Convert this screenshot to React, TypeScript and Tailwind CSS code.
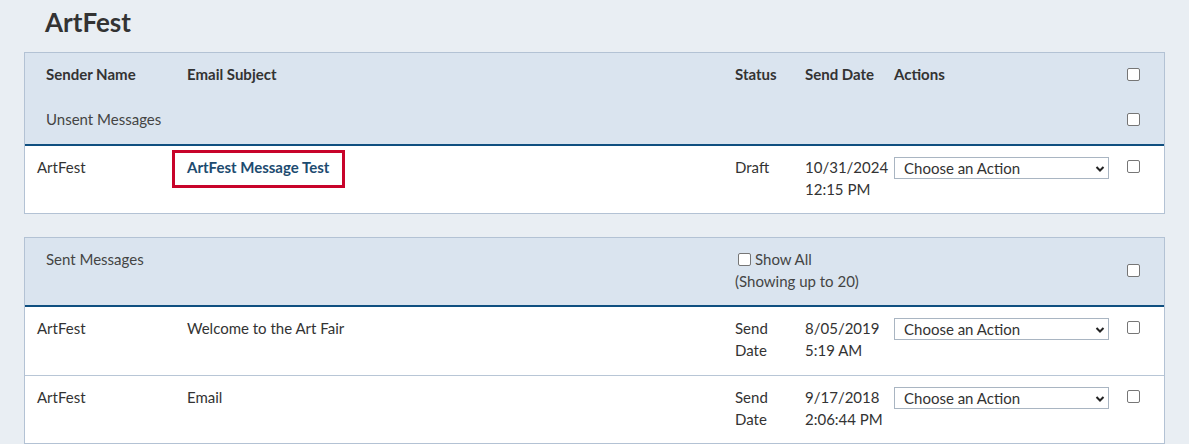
import React from "react";

const COLS = "grid grid-cols-[162px_548px_70px_89px_232px_1fr]";

function Check() {
  return (
    <span className="inline-block w-[13px] h-[13px] rounded-[2px] border border-[#767676] bg-white box-border" />
  );
}

function ActionSelect() {
  return (
    <div className="relative w-[215px] h-[22px] border border-[#a9b5c2] bg-white flex items-center pl-[9px] text-[15px] text-[#333] leading-none box-border">
      <span>Choose an Action</span>
      <svg className="absolute right-[3px] top-[7px]" width="10" height="8" viewBox="0 0 10 8">
        <path d="M1.5 2 L5 5.5 L8.5 2" fill="none" stroke="#222" strokeWidth="2" />
      </svg>
    </div>
  );
}

function DataRow({
  sender,
  subject,
  status,
  date,
  highlight,
  last,
}: {
  sender: string;
  subject: string;
  status: React.ReactNode;
  date: React.ReactNode;
  highlight?: boolean;
  last?: boolean;
}) {
  return (
    <div className={`${COLS} bg-white pt-[10px] leading-[22px] text-[15px] text-[#333] ${last ? "pb-[13px]" : "pb-[14px] border-b border-[#b8c6d6]"}`}>
      <div className="pl-[12px]">{sender}</div>
      <div className="relative">
        {highlight ? (
          <span className="relative font-bold text-[#1d4b70]">
            {subject}
            <span className="absolute left-[-15px] right-[-16px] top-[-8px] bottom-[-12px] border-[3px] border-[#c8042a]" />
          </span>
        ) : (
          subject
        )}
      </div>
      <div>{status}</div>
      <div>{date}</div>
      <div className="pt-[1px]">
        <ActionSelect />
      </div>
      <div className="flex items-start pt-[4px] pl-[1px]">
        <Check />
      </div>
    </div>
  );
}

export default function App() {
  return (
    <div className="min-h-[444px] bg-[#e9eef3] pb-4" style={{ fontFamily: "Lato, 'Liberation Sans', sans-serif" }}>
      <div className="h-[52px] pl-[45px] pt-[5px]">
        <h1 className="text-[26px] font-bold text-[#333] leading-[34px]">ArtFest</h1>
      </div>

      <div className="mx-[24px] w-[1141px] border border-[#b3c2d4] bg-white">
        <div className="bg-[#dae4ef] border-b-2 border-[#0f4f80] text-[15px] leading-[22px]">
          <div className={`${COLS} pt-[10px] pb-[11px] font-bold text-[#333]`}>
            <div className="pl-[21px]">Sender Name</div>
            <div>Email Subject</div>
            <div>Status</div>
            <div>Send Date</div>
            <div>Actions</div>
            <div className="flex items-center pl-[1px]"><Check /></div>
          </div>
          <div className={`${COLS} pt-[12px] pb-[14px] text-[#444]`}>
            <div className="pl-[21px] col-span-5">Unsent Messages</div>
            <div className="flex items-center pl-[1px]"><Check /></div>
          </div>
        </div>
        <DataRow
          sender="ArtFest"
          subject="ArtFest Message Test"
          status="Draft"
          date={<>10/31/2024<br />12:15 PM</>}
          highlight
          last
        />
      </div>

      <div className="mx-[24px] mt-[23px] w-[1141px] border border-[#b3c2d4] bg-white">
        <div className={`${COLS} bg-[#dae4ef] border-b-2 border-[#0f4f80] text-[15px] leading-[22px] pt-[10px] pb-[13px] text-[#444]`}>
          <div className="pl-[21px] col-span-2">Sent Messages</div>
          <div className="col-span-3">
            <div className="flex items-center gap-[4px] pl-[3px]">
              <Check />
              <span>Show All</span>
            </div>
            <div>(Showing up to 20)</div>
          </div>
          <div className="flex items-center pl-[1px]"><Check /></div>
        </div>
        <DataRow
          sender="ArtFest"
          subject="Welcome to the Art Fair"
          status={<>Send<br />Date</>}
          date={<>8/05/2019<br />5:19 AM</>}
        />
        <DataRow
          sender="ArtFest"
          subject="Email"
          status={<>Send<br />Date</>}
          date={<>9/17/2018<br />2:06:44 PM</>}
          last
        />
      </div>
    </div>
  );
}
